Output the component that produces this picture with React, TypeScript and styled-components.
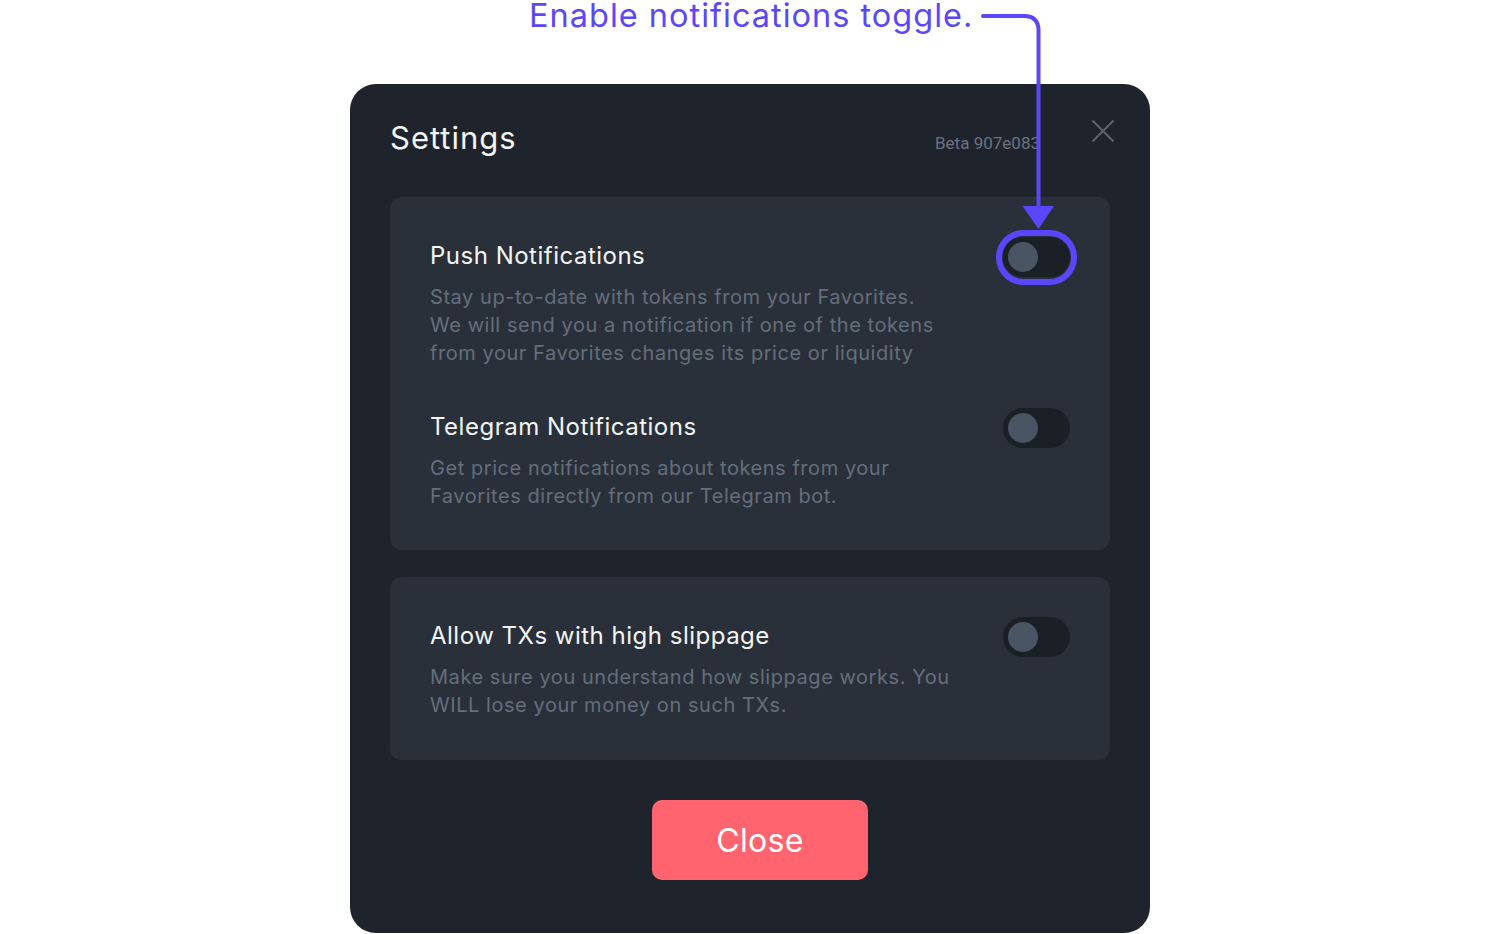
import React from "react";
import styled, { createGlobalStyle } from "styled-components";

const GlobalStyle = createGlobalStyle`
  html, body {
    margin: 0;
    padding: 0;
    background: #ffffff;
  }
  body {
    font-family: Inter, "Noto Sans", sans-serif;
    height: 934px;
    overflow: hidden;
  }
`;

const Page = styled.div`
  position: relative;
  width: 1500px;
  height: 934px;
  display: flex;
  justify-content: center;
  align-items: flex-start;
`;

const Modal = styled.section`
  width: 800px;
  box-sizing: border-box;
  margin-top: 84px;
  padding: 34px 40px 53px;
  background: #1f242c;
  border-radius: 26px;
  display: flex;
  flex-direction: column;
`;

const Header = styled.header`
  display: flex;
  align-items: baseline;
  height: 40px;
  margin-bottom: 39px;
`;

const Title = styled.h1`
  flex: 1;
  margin: 0;
  font-size: 31px;
  line-height: 40px;
  font-weight: 400;
  color: #f4f5f6;
  letter-spacing: 1px;
`;

const Build = styled.span`
  font-family: Roboto, "Liberation Sans", sans-serif;
  font-size: 17px;
  color: #6b7380;
  margin-right: 51px;
`;

const CloseIcon = styled.button`
  align-self: flex-start;
  width: 24px;
  height: 24px;
  margin-top: 1px;
  margin-right: -5px;
  padding: 0;
  border: none;
  background: none;
  cursor: pointer;
  display: flex;
`;

const Card = styled.div<{ $last?: boolean }>`
  background: #2a3039;
  border-radius: 12px;
  padding: 40px 40px ${(p) => (p.$last ? "41px" : "40px")};
  display: flex;
  flex-direction: column;
  gap: 41px;
  & + & {
    margin-top: 27px;
  }
`;

const Item = styled.div`
  display: flex;
  flex-direction: column;
`;

const ItemHead = styled.div`
  display: flex;
  align-items: center;
  justify-content: space-between;
  height: 40px;
`;

const ItemTitle = styled.div`
  font-size: 24px;
  color: #f4f5f6;
  letter-spacing: 0.5px;
  margin-top: -3px;
`;

const ItemText = styled.p`
  margin: 6px 0 0;
  font-size: 20px;
  line-height: 28px;
  color: #656e7b;
  letter-spacing: 0.55px;
`;

const Switch = styled.div<{ $highlight?: boolean }>`
  position: relative;
  width: 67px;
  height: 40px;
  border-radius: 20px;
  background: #1b1f26;
  flex-shrink: 0;
  &::before {
    content: "";
    position: absolute;
    left: 5px;
    top: 5px;
    width: 30px;
    height: 30px;
    border-radius: 50%;
    background: #4a5563;
  }
  ${(p) =>
    p.$highlight &&
    `
    &::after {
      content: "";
      position: absolute;
      inset: -7px -7px -8px -7px;
      border: 6px solid #5b47fb;
      border-radius: 30px;
    }
  `}
`;

const CloseButton = styled.button`
  align-self: center;
  width: 216px;
  height: 80px;
  margin: 40px 0 0 20px;
  border: none;
  border-radius: 10px;
  background: #ff646f;
  color: #ffffff;
  font-family: Inter, "Noto Sans", sans-serif;
  font-size: 32px;
  font-weight: 400;
  letter-spacing: 0.3px;
  cursor: pointer;
`;

const Callout = styled.div`
  position: absolute;
  left: 529px;
  top: 0;
  font-size: 32.5px;
  line-height: 32px;
  color: #5b47fb;
  letter-spacing: 1px;
  white-space: nowrap;
  pointer-events: none;
`;

const ArrowLayer = styled.svg`
  position: absolute;
  left: 0;
  top: 0;
  pointer-events: none;
`;

type Setting = {
  title: string;
  lines: string[];
  highlight?: boolean;
};

const notificationSettings: Setting[] = [
  {
    title: "Push Notifications",
    lines: [
      "Stay up-to-date with tokens from your Favorites.",
      "We will send you a notification if one of the tokens",
      "from your Favorites changes its price or liquidity",
    ],
    highlight: true,
  },
  {
    title: "Telegram Notifications",
    lines: [
      "Get price notifications about tokens from your",
      "Favorites directly from our Telegram bot.",
    ],
  },
];

const tradeSettings: Setting[] = [
  {
    title: "Allow TXs with high slippage",
    lines: [
      "Make sure you understand how slippage works. You",
      "WILL lose your money on such TXs.",
    ],
  },
];

const SettingItem: React.FC<{ setting: Setting }> = ({ setting }) => (
  <Item>
    <ItemHead>
      <ItemTitle>{setting.title}</ItemTitle>
      <Switch $highlight={setting.highlight} />
    </ItemHead>
    <ItemText>
      {setting.lines.map((line, i) => (
        <React.Fragment key={i}>
          {i > 0 && <br />}
          {line}
        </React.Fragment>
      ))}
    </ItemText>
  </Item>
);

const App: React.FC = () => (
  <Page>
    <GlobalStyle />
    <Modal>
      <Header>
        <Title>Settings</Title>
        <Build>Beta 907e083</Build>
        <CloseIcon aria-label="close">
          <svg width="24" height="24" viewBox="0 0 24 24">
            <path
              d="M1.5 1.5 L22.5 22.5 M22.5 1.5 L1.5 22.5"
              stroke="#5b6370"
              strokeWidth="2"
              fill="none"
            />
          </svg>
        </CloseIcon>
      </Header>
      <Card>
        {notificationSettings.map((s) => (
          <SettingItem key={s.title} setting={s} />
        ))}
      </Card>
      <Card $last>
        {tradeSettings.map((s) => (
          <SettingItem key={s.title} setting={s} />
        ))}
      </Card>
      <CloseButton>Close</CloseButton>
    </Modal>
    <Callout>Enable notifications toggle.</Callout>
    <ArrowLayer width="1500" height="300" viewBox="0 0 1500 300">
      <path
        d="M983 16 H1024 Q1038.5 16 1038.5 30.5 V208"
        stroke="#5b47fb"
        strokeWidth="4"
        fill="none"
        strokeLinecap="round"
      />
      <path d="M1022.5 206 L1054 206 L1038.5 229 Z" fill="#5b47fb" />
    </ArrowLayer>
  </Page>
);

export default App;
